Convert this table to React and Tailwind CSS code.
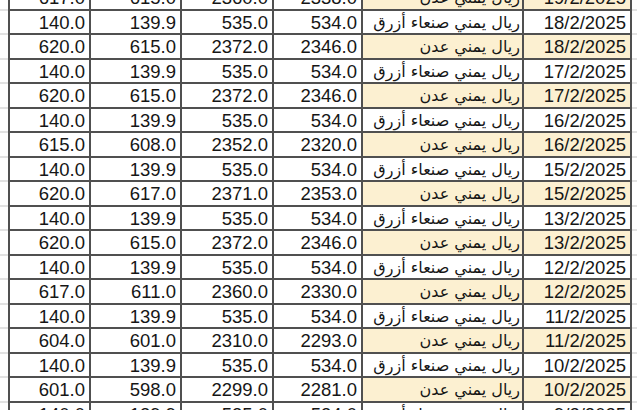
import React from "react";

const SANAA = "ريال يمني صنعاء أزرق";
const ADEN = "ريال يمني عدن";

const rows = [
  ["617.0", "615.0", "2360.0", "2338.0", ADEN, "19/2/2025", true],
  ["140.0", "139.9", "535.0", "534.0", SANAA, "18/2/2025", false],
  ["620.0", "615.0", "2372.0", "2346.0", ADEN, "18/2/2025", true],
  ["140.0", "139.9", "535.0", "534.0", SANAA, "17/2/2025", false],
  ["620.0", "615.0", "2372.0", "2346.0", ADEN, "17/2/2025", true],
  ["140.0", "139.9", "535.0", "534.0", SANAA, "16/2/2025", false],
  ["615.0", "608.0", "2352.0", "2320.0", ADEN, "16/2/2025", true],
  ["140.0", "139.9", "535.0", "534.0", SANAA, "15/2/2025", false],
  ["620.0", "617.0", "2371.0", "2353.0", ADEN, "15/2/2025", true],
  ["140.0", "139.9", "535.0", "534.0", SANAA, "13/2/2025", false],
  ["620.0", "615.0", "2372.0", "2346.0", ADEN, "13/2/2025", true],
  ["140.0", "139.9", "535.0", "534.0", SANAA, "12/2/2025", false],
  ["617.0", "611.0", "2360.0", "2330.0", ADEN, "12/2/2025", true],
  ["140.0", "139.9", "535.0", "534.0", SANAA, "11/2/2025", false],
  ["604.0", "601.0", "2310.0", "2293.0", ADEN, "11/2/2025", true],
  ["140.0", "139.9", "535.0", "534.0", SANAA, "10/2/2025", false],
  ["601.0", "598.0", "2299.0", "2281.0", ADEN, "10/2/2025", true],
  ["140.0", "139.9", "535.0", "534.0", SANAA, "9/2/2025", false],
];

function Row({ r }) {
  const [a, b, c, d, label, date, yellow] = r;
  const num =
    "flex items-center justify-end pr-1 pt-[2px] border-r-2 border-b-2 border-[#505050] text-[18.5px] text-[#161616]";
  const hi = yellow ? "bg-[#fcf0d1]" : "bg-white";
  return (
    <div className="flex h-[24.5px] shrink-0">
      <div className="w-[8px] shrink-0 border-b-2 border-[#e2e2e2]" />
      <div className={`${num} w-[83px] border-l-2 shrink-0`}>{a}</div>
      <div className={`${num} w-[91px] shrink-0`}>{b}</div>
      <div className={`${num} w-[92px] shrink-0`}>{c}</div>
      <div className={`${num} w-[89px] shrink-0`}>{d}</div>
      <div
        className={`flex items-center justify-end pr-[2px] pt-[2px] border-r-2 border-b-2 border-[#505050] w-[161px] shrink-0 text-[16px] text-[#161616] ${hi}`}
        style={{ fontFamily: '"DejaVu Sans", sans-serif' }}
      >
        <span dir="rtl">{label}</span>
      </div>
      <div className={`${num} w-[108px] shrink-0 ${hi}`}>{date}</div>
      <div className="flex-1 border-b-2 border-[#e2e2e2]" />
    </div>
  );
}

export default function App() {
  return (
    <div
      className="w-[637px] h-[410px] overflow-hidden bg-white"
      style={{ fontFamily: '"Liberation Sans", Arial, sans-serif' }}
    >
      <div className="flex flex-col mt-[-14px]">
        {rows.map((r, i) => (
          <Row key={i} r={r} />
        ))}
      </div>
    </div>
  );
}
